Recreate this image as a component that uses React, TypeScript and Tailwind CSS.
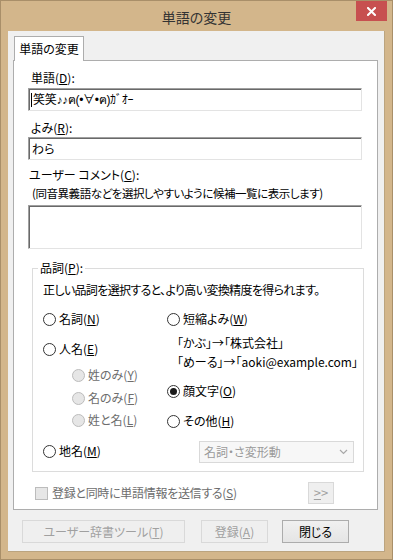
import React from 'react';

const ui = "font-['Noto_Sans_CJK_JP','Noto_Sans',sans-serif] [font-feature-settings:'palt']";

function Radio({ checked, disabled }: { checked?: boolean; disabled?: boolean }) {
  return (
    <span
      className={`flex h-[13px] w-[13px] shrink-0 items-center justify-center rounded-full border ${
        disabled ? 'border-[#bcbcbc] bg-[#e6e6e6]' : 'border-[#333333] bg-white'
      }`}
    >
      {checked && <span className="h-[7px] w-[7px] rounded-full bg-[#1a1a1a]" />}
    </span>
  );
}

function Option({ label, keyChar, checked, disabled, className = '' }: {
  label: string; keyChar: string; checked?: boolean; disabled?: boolean; className?: string;
}) {
  return (
    <div className={`flex h-5 items-center gap-[3px] ${className}`}>
      <Radio checked={checked} disabled={disabled} />
      <span className={disabled ? 'text-[#6d6d6d]' : 'text-black'}>
        {label}(<u>{keyChar}</u>)
      </span>
    </div>
  );
}

export default function App() {
  return (
    <div className={`flex h-[560px] w-[393px] flex-col border border-[#a98f69] bg-[#d3b68b] text-[12px] leading-4 ${ui}`}>
      {/* title bar */}
      <div className="grid h-[30px] grid-cols-[1fr_auto_1fr]">
        <div />
        <div className="pt-[6px] text-[14px] leading-5 text-[#333333]">単語の変更</div>
        <div className="flex justify-end pr-[5px]">
          <button className="flex h-5 w-[31px] items-center justify-center bg-[#c75050]">
            <svg width="9" height="9" viewBox="0 0 9 9">
              <path d="M1 1 L8 8 M8 1 L1 8" stroke="white" strokeWidth="2" strokeLinecap="square" />
            </svg>
          </button>
        </div>
      </div>

      {/* client */}
      <div className="mx-[7px] flex h-[521px] flex-col border-r border-b border-[#bba47f] bg-[#f0f0f0] pt-[5px]">
        <div className="relative z-10 -mb-px ml-[6px] flex h-[25px] w-[70px] justify-center border border-b-0 border-[#adadad] bg-white pt-[4px] text-black">
          単語の変更
        </div>

        <div className="ml-[5px] flex h-[450px] w-[365px] flex-col border border-[#adadad] bg-white text-black">
          <div className="ml-[17px] mt-[9px] h-4">単語(<u>D</u>):</div>
          <div className="ml-[14px] mt-[2px] flex h-[23px] w-[334px] items-center border border-t-[#a0a0a0] border-l-[#a0a0a0] border-r-[#e3e3e3] border-b-[#e3e3e3] pl-[2px] shadow-[inset_1px_1px_0_#696969]">
            <span className="mr-[1px] h-[14px] w-px bg-black" />
            <span className="whitespace-nowrap font-['Liberation_Sans','Noto_Sans_CJK_JP',sans-serif] tracking-[-0.3px]">笑笑♪♪ฅ(•∀•ฅ)ｶﾞｵｰ</span>
          </div>

          <div className="ml-[17px] mt-[9px] h-4">よみ(<u>R</u>):</div>
          <div className="ml-[14px] mt-[1px] flex h-[23px] w-[334px] items-center border border-t-[#a0a0a0] border-l-[#a0a0a0] border-r-[#e3e3e3] border-b-[#e3e3e3] pl-[3px] shadow-[inset_1px_1px_0_#696969]">
            わら
          </div>

          <div className="ml-[15px] mt-[7px] h-4">ユーザー コメント(<u>C</u>):</div>
          <div className="ml-[18px] mt-[2px] h-4 text-[11.5px] tracking-[-0.45px]">(同音異義語などを選択しやすいように候補一覧に表示します)</div>
          <div className="ml-[14px] mt-[4px] h-[44px] w-[334px] border border-t-[#a0a0a0] border-l-[#a0a0a0] border-r-[#e3e3e3] border-b-[#e3e3e3] shadow-[inset_1px_1px_0_#696969]" />

          {/* part of speech group */}
          <div className="relative ml-[18px] mt-[19px] flex h-[204px] w-[332px] flex-col border border-[#dcdcdc] pl-[10px]">
            <span className="absolute -top-[9px] left-[5px] bg-white px-[2px]">品詞(<u>P</u>):</span>
            <div className="mt-[13px] h-4 tracking-[-0.65px]">正しい品詞を選択すると、より高い変換精度を得られます。</div>
            <div className="mt-[11px] grid grid-cols-[124px_1fr]">
              <div className="flex flex-col">
                <Option label="名詞" keyChar="N" />
                <Option label="人名" keyChar="E" className="mt-[10px]" />
                <Option label="姓のみ" keyChar="Y" disabled className="ml-[29px] mt-[6px]" />
                <Option label="名のみ" keyChar="F" disabled className="ml-[29px] mt-[3px]" />
                <Option label="姓と名" keyChar="L" disabled className="ml-[29px] mt-[2px]" />
                <Option label="地名" keyChar="M" className="mt-[11px]" />
              </div>
              <div className="flex flex-col">
                <Option label="短縮よみ" keyChar="W" />
                <div className="ml-[10px] mt-[5px] flex h-[18px] items-center">「かぶ」→「株式会社」</div>
                <div className="ml-[10px] mt-[1px] flex h-[18px] items-center">「めーる」→「aoki@example.com」</div>
                <Option label="顔文字" keyChar="O" checked className="mt-[10px]" />
                <Option label="その他" keyChar="H" className="mt-[10px]" />
                <div className="ml-[32px] mt-[10px] flex h-[22px] w-[155px] items-center justify-between border border-[#d9d9d9] bg-[#f7f7f7] pl-[4px] pr-[5px] text-[#9a9a9a]">
                  <span>名詞・さ変形動</span>
                  <svg width="9" height="6" viewBox="0 0 9 6">
                    <path d="M1 1 L4.5 4.5 L8 1" stroke="#a8a8a8" strokeWidth="1.2" fill="none" />
                  </svg>
                </div>
              </div>
            </div>
          </div>

          <div className="mt-[10px] flex h-[22px] items-center">
            <span className="ml-[21px] h-[13px] w-[13px] border border-[#bcbcbc] bg-[#e6e6e6]" />
            <span className="ml-[4px] tracking-[-0.3px] text-[#6d6d6d]">登録と同時に単語情報を送信する(<u>S</u>)</span>
            <button className="ml-auto mr-[43px] flex h-[22px] w-[26px] items-center justify-center border border-[#d9d9d9] bg-[#efefef] text-[13px] text-[#a0a0a0]">
              <u>&gt;</u>&gt;
            </button>
          </div>
        </div>

        <div className="ml-[14px] mt-[10px] flex h-[23px] items-stretch">
          <button className="w-[163px] border border-[#d9d9d9] bg-[#efefef] text-[#a0a0a0]">
            ユーザー辞書ツール(<u>T</u>)
          </button>
          <button className="ml-[16px] w-[67px] border border-[#d9d9d9] bg-[#efefef] text-[#a0a0a0]">
            登録(<u>A</u>)
          </button>
          <button className="ml-[14px] w-[67px] border border-[#acacac] bg-gradient-to-b from-[#f0f0f0] to-[#e5e5e5] text-black">
            閉じる
          </button>
        </div>
      </div>
    </div>
  );
}
